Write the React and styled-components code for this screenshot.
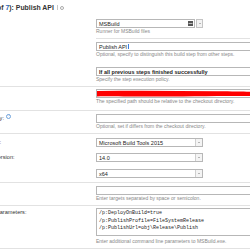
import React from "react";
import styled, { createGlobalStyle } from "styled-components";

const GlobalStyle = createGlobalStyle`
  html, body {
    margin: 0;
    padding: 0;
    background: #fff;
    overflow: hidden;
  }
  body {
    font-family: "Liberation Sans", Arial, sans-serif;
    color: #333;
  }
`;

const App = () => {
    return (
        <>
            <GlobalStyle />
            <Page>
                <Title>
                    <span>
                        Build Step (<TitleLink>3</TitleLink> of <TitleLink>7</TitleLink>): Publish API
                    </span>
                    <TitleTools>
                        <ToolBar />
                        <ToolDot />
                    </TitleTools>
                </Title>

                {/* runner type */}
                <Row $top={7}>
                    <Label />
                    <Field $bottom={4} $sep>
                        <Combo>
                            <Box $w="99px">
                                <Value>MSBuild</Value>
                                <ListIcon width="5" height="5" viewBox="0 0 5 5">
                                    <rect width="5" height="5" fill="#555" />
                                    <rect x="0.5" y="2" width="4" height="1" fill="#bbb" />
                                </ListIcon>
                            </Box>
                            <DropButton>
                                <Arrow />
                            </DropButton>
                        </Combo>
                        <Hint>Runner for MSBuild files</Hint>
                    </Field>
                </Row>

                {/* step name */}
                <Row $top={3}>
                    <Label />
                    <Field $bottom={5}>
                        <Box>
                            <Value>Publish API</Value>
                            <Caret />
                        </Box>
                        <Hint>Optional, specify to distinguish this build step from other steps.</Hint>
                    </Field>
                </Row>

                {/* execute step */}
                <Row $top={5} $sep>
                    <Label>Execute step:</Label>
                    <Field $bottom={4}>
                        <Box>
                            <Value $strong>If all previous steps finished successfully</Value>
                        </Box>
                        <Hint>Specify the step execution policy.</Hint>
                    </Field>
                </Row>

                {/* build file path (hidden) */}
                <Row $top={2} $sep>
                    <Label>Build file path:</Label>
                    <Field $bottom={6}>
                        <Box>
                            <Redact viewBox="0 0 160 7" preserveAspectRatio="none">
                                <path d="M0 1 C40 0.5 80 0.8 120 1.2 C140 1.3 150 1.6 160 2 L160 6 C130 5.6 90 6.4 50 6.6 C30 6.6 10 6.2 0 6.4 Z" fill="#ff0000" />
                            </Redact>
                        </Box>
                        <Hint>The specified path should be relative to the checkout directory.</Hint>
                    </Field>
                </Row>

                {/* working directory */}
                <Row $top={3} $sep>
                    <Label>
                        Working directory:<Help>?</Help>
                    </Label>
                    <Field $bottom={4}>
                        <Box />
                        <Hint>Optional, set if differs from the checkout directory.</Hint>
                    </Field>
                </Row>

                {/* msbuild versions */}
                <Row $top={4}>
                    <Label>MSBuild version:</Label>
                    <Field $bottom={0}>
                        <Select value="Microsoft Build Tools 2015" />
                    </Field>
                </Row>
                <Row $top={6}>
                    <Label>MSBuild ToolsVersion:</Label>
                    <Field $bottom={0}>
                        <Select value="14.0" />
                    </Field>
                </Row>
                <Row $top={7} $sep>
                    <Label>Run platform:</Label>
                    <Field $bottom={4}>
                        <Select value="x64" />
                    </Field>
                </Row>

                {/* targets */}
                <Row $top={3} $sep>
                    <Label>Targets:</Label>
                    <Field $bottom={4}>
                        <Box />
                        <Hint>Enter targets separated by space or semicolon.</Hint>
                    </Field>
                </Row>

                {/* command line params */}
                <Row $top={2} $sep>
                    <Label>Command line parameters:</Label>
                    <Field $bottom={4}>
                        <TextArea>
                            <div>/p:DeployOnBuild=true</div>
                            <div>/p:PublishProfile=FileSystemRelease</div>
                            <div>/p:PublishUrl=obj\Release\Publish</div>
                        </TextArea>
                        <Hint $gap={2}>Enter additional command line parameters to MSBuild.exe.</Hint>
                    </Field>
                </Row>
            </Page>
        </>
    );
};

const Select = ({ value }) => (
    <Box $w="107px">
        <Value>{value}</Value>
        <SelectArrow>
            <Arrow />
        </SelectArrow>
    </Box>
);

export default App;

const Page = styled.div`
    width: 420px;
    margin-left: -41px; /* page is cropped on the left */
    padding-top: 3px;
`;

const Title = styled.h2`
    display: flex;
    align-items: center;
    gap: 3px;
    margin: 0 0 0 -6px;
    font-size: 6.9px;
    line-height: 9px;
    font-weight: bold;
    color: #333;
    white-space: nowrap;
`;

const TitleLink = styled.span`
    color: #2966b8;
`;

const TitleTools = styled.span`
    display: flex;
    align-items: center;
    gap: 2px;
`;

const ToolBar = styled.span`
    width: 1px;
    height: 5px;
    background: #c8c8c8;
`;

const ToolDot = styled.span`
    width: 2px;
    height: 2px;
    border: 1px solid #aaa;
    border-radius: 50%;
`;

const Row = styled.div`
    display: grid;
    grid-template-columns: 137px 1fr;
    padding-top: ${(p) => p.$top}px;
    border-bottom: ${(p) => (p.$sep ? "1px solid #e2e2e2" : "none")};
`;

const Label = styled.label`
    font-size: 5.6px;
    line-height: 9px;
    color: #333;
    white-space: nowrap;
`;

const Help = styled.span`
    display: inline-block;
    vertical-align: top;
    margin-left: 2px;
    width: 3px;
    height: 3px;
    border: 1px solid #6fa3dc;
    border-radius: 50%;
    font-size: 3px;
    line-height: 3px;
    text-align: center;
    color: #6fa3dc;
`;

const Field = styled.div`
    padding-bottom: ${(p) => p.$bottom}px;
    border-bottom: ${(p) => (p.$sep ? "1px solid #e2e2e2" : "none")};
`;

const Combo = styled.div`
    display: flex;
    gap: 1px;
`;

const Box = styled.div`
    box-sizing: border-box;
    display: flex;
    align-items: center;
    position: relative;
    width: ${(p) => p.$w || "100%"};
    height: 9px;
    padding-left: 2px;
    border: 1px solid #b7b7b7;
    background: #fff;
    overflow: hidden;
`;

const Value = styled.span`
    flex: 1;
    font-size: 5.5px;
    color: #222;
    font-weight: ${(p) => (p.$strong ? "bold" : "normal")};
    white-space: nowrap;
`;

const Caret = styled.span`
    position: absolute;
    left: 30.5px;
    top: 1px;
    width: 1px;
    height: 5px;
    background: #3a7fe0;
`;

const ListIcon = styled.svg`
    flex: none;
    margin-right: 1px;
`;

const DropButton = styled.div`
    box-sizing: border-box;
    display: flex;
    align-items: center;
    justify-content: center;
    width: 7px;
    height: 9px;
    border: 1px solid #c4c4c4;
    background: #f3f3f3;
`;

const SelectArrow = styled.div`
    display: flex;
    align-items: center;
    justify-content: center;
    width: 6px;
    height: 100%;
    border-left: 1px solid #cfcfcf;
    background: #f4f4f4;
`;

const Arrow = styled.span`
    width: 0;
    height: 0;
    border-left: 1.5px solid transparent;
    border-right: 1.5px solid transparent;
    border-top: 1.5px solid #777;
`;

const Redact = styled.svg`
    position: absolute;
    left: 0;
    top: 0;
    width: 160px;
    height: 7px;
`;

const Hint = styled.div`
    margin-top: ${(p) => p.$gap || 0}px;
    font-size: 5px;
    line-height: 6px;
    color: #888;
    white-space: nowrap;
`;

const TextArea = styled.div`
    box-sizing: border-box;
    height: 28px;
    padding: 1px 2px;
    border: 1px solid #b7b7b7;
    font-family: "Liberation Mono", "Courier New", monospace;
    font-size: 5px;
    line-height: 7.7px;
    color: #222;
    white-space: pre;
`;
